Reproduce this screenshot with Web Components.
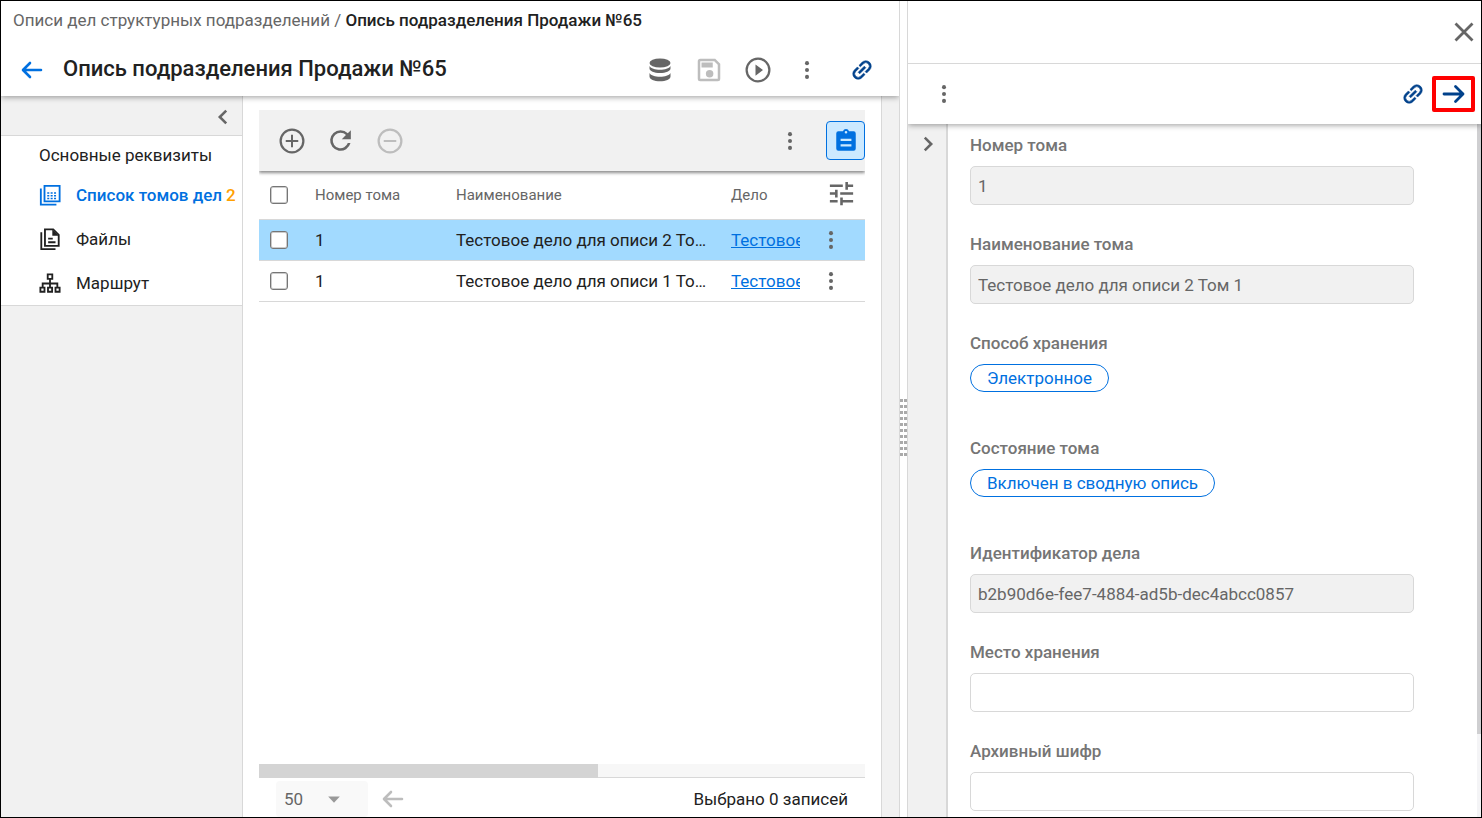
<!doctype html>
<html lang="ru">
<head>
    <meta charset="utf-8" />
    <title>Опись подразделения Продажи №65</title>
    <style>
        html, body {
            height: 100%;
            margin: 0;
        }
        body {
            --blue: #0070e0;
            --navy: #00418b;
            --grey: #666;
            --line: #d8d8d8;
            --panel: #f1f1f1;
            font: 17px/20px Roboto, "Liberation Sans", sans-serif;
            color: #212121;
        }
    </style>
</head>
<body>
    <x-workspace>
        <x-record slot="main"></x-record>
        <x-card slot="side"></x-card>
    </x-workspace>

<script>
const ICONS = {
    back: '<path d="M21 12H3.500M10 5l-7 7 7 7" fill="none" stroke="currentColor" stroke-width="2.600" stroke-linecap="round" stroke-linejoin="round"/>',
    forward: '<path d="M2 12h19M13.500 4.500l7.500 7.500-7.500 7.500" fill="none" stroke="currentColor" stroke-width="2.800" stroke-linecap="round" stroke-linejoin="round"/>',
    left: '<path d="M15.500 5l-7 7 7 7" fill="none" stroke="currentColor" stroke-width="2.800"/>',
    right: '<path d="M8.500 5l7 7-7 7" fill="none" stroke="currentColor" stroke-width="2.800"/>',
    close: '<path d="M3.500 3.500l17 17M20.500 3.500l-17 17" fill="none" stroke="currentColor" stroke-width="2.800"/>',
    more: '<circle cx="12" cy="4.500" r="2.200"/><circle cx="12" cy="12" r="2.200"/><circle cx="12" cy="19.500" r="2.200"/>',
    database: '<ellipse cx="12" cy="5" rx="10.500" ry="4.600"/><path d="M1.500 8c1.500 2.500 5.500 3.700 10.500 3.700s9-1.200 10.500-3.700v2.500c0 2.600-4.700 4.600-10.500 4.600S1.500 13.100 1.500 10.500zM1.500 15c1.500 2.500 5.500 3.700 10.500 3.700s9-1.200 10.500-3.700v3.500c0 2.700-4.700 4.800-10.500 4.800S1.500 21.200 1.500 18.500z"/>',
    save: '<path d="M17 3H5a2 2 0 0 0-2 2v14a2 2 0 0 0 2 2h14a2 2 0 0 0 2-2V7zm2 16H5V5h11.200L19 7.800z"/><circle cx="12.500" cy="15" r="3"/><path d="M6 6h9v4H6z"/>',
    play: '<path d="M10 16.500l6-4.500-6-4.500zM12 2a10 10 0 1 0 0 20 10 10 0 0 0 0-20zm0 18.200a8.200 8.200 0 1 1 0-16.400 8.200 8.200 0 0 1 0 16.400z"/>',
    add: '<path d="M12.800 7h-1.600v4.200H7v1.600h4.200V17h1.600v-4.200H17v-1.600h-4.200zM12 2a10 10 0 1 0 0 20 10 10 0 0 0 0-20zm0 18.200a8.200 8.200 0 1 1 0-16.400 8.200 8.200 0 0 1 0 16.400z"/>',
    remove: '<path d="M7 11.200v1.600h10v-1.600zM12 2a10 10 0 1 0 0 20 10 10 0 0 0 0-20zm0 18.200a8.200 8.200 0 1 1 0-16.400 8.200 8.200 0 0 1 0 16.400z"/>',
    refresh: '<path d="M17.650 6.350A7.960 7.960 0 0 0 12 4a8 8 0 1 0 7.730 10h-2.080A6 6 0 1 1 12 6c1.660 0 3.140.690 4.220 1.780L13 11h7V4z"/>',
    link: '<path transform="rotate(-45 12 12)" stroke="currentColor" stroke-width=".5" d="M3.900 12A3.100 3.100 0 0 1 7 8.900h4V7H7a5 5 0 0 0 0 10h4v-1.900H7A3.100 3.100 0 0 1 3.900 12zM8 13h8v-2H8zm9-6h-4v1.900h4a3.100 3.100 0 0 1 0 6.200h-4V17h4a5 5 0 0 0 0-10z"/>',
    tune: '<path d="M3 17v2h6v-2zM3 5v2h10V5zm10 16v-2h8v-2h-8v-2h-2v6zM7 9v2H3v2h4v2h2V9zm14 4v-2H11v2zm-6-4h2V7h4V5h-4V3h-2z"/>',
    clipboard: '<path d="M19 3h-4.180a3 3 0 0 0-5.640 0H5a2 2 0 0 0-2 2v14a2 2 0 0 0 2 2h14a2 2 0 0 0 2-2V5a2 2 0 0 0-2-2zm-7-.300a1.200 1.200 0 1 1 0 2.400 1.200 1.200 0 0 1 0-2.400zM17 17H7v-2h10zm0-5H7v-2h10z"/>',
    volumes: '<g fill="none" stroke="currentColor" stroke-width="2"><path d="M6 2h16.500v17H6zM2 5v17.500h17"/></g><path d="M9 9h2.200v1.700H9zm3.700 0h2.200v1.700h-2.200zm3.700 0h2.200v1.700h-2.200zM9 12h2.200v1.700H9zm3.700 0h2.200v1.700h-2.200zm3.700 0h2.200v1.700h-2.200zM9 15h2.200v1.700H9zm3.700 0h2.200v1.700h-2.200zm3.700 0h2.200v1.700h-2.200z"/>',
    files: '<g fill="none" stroke="currentColor" stroke-width="2"><path d="M6.500 1.500h9l6 6v12h-15zM2.500 4.500V23H18M10 11.500h5M10 15.500h8"/></g><path d="M14.500 1.500v7h7z"/>',
    route: '<g fill="none" stroke="currentColor" stroke-width="2"><path d="M9.500 2.500h5v5h-5zM1.500 17h4.500v4.500H1.500zM9.800 17h4.500v4.500H9.800zM18 17h4.500v4.500H18zM12 7.500V17M4 17v-4.500h16V17"/></g>',
    drop: '<path d="M5 9h14l-7 7.500z"/>'
};

class XElement extends HTMLElement {
    constructor () {
        super();
        this.attachShadow({mode: 'open'});
    }
    connectedCallback () {
        this.shadowRoot.innerHTML = `<style>*, :host { box-sizing: border-box; }</style>` + this.render();
    }
}

// <x-icon name="add" size="30">
customElements.define('x-icon', class extends XElement {
    render () {
        const size = this.getAttribute('size') || 24;
        return `
            <style>
                :host { display: inline-flex; flex: none; }
                svg { display: block; fill: currentColor; }
            </style>
            <svg width="${size}" height="${size}" viewBox="0 0 24 24" aria-hidden="true">${ICONS[this.getAttribute('name')]}</svg>`;
    }
});

// Icon button; kinds: navy, blue, toggled, marked
customElements.define('x-button', class extends XElement {
    render () {
        return `
            <style>
                :host { display: inline-flex; flex: none; }
                button {
                    display: flex;
                    align-items: center;
                    justify-content: center;
                    width: var(--button-width, 49px);
                    height: 36px;
                    padding: 0;
                    border: 0;
                    background: none;
                    color: var(--grey);
                    cursor: pointer;
                }
                button:disabled { color: #bdbdbd; cursor: default; }
                :host([kind=blue]) button { color: var(--blue); }
                :host([kind=navy]) button, :host([kind=marked]) button { color: var(--navy); }
                :host([kind=marked]) button {
                    width: 43px;
                    border: 4px solid #f00;
                    border-radius: 2px;
                }
                :host([kind=toggled]) button {
                    width: 39px;
                    height: 39px;
                    border: 1px solid var(--blue);
                    border-radius: 4px;
                    background: #cce9ff;
                    color: var(--blue);
                }
            </style>
            <button type="button" aria-label="${this.getAttribute('label')}" ${this.hasAttribute('disabled') ? 'disabled' : ''}>
                <x-icon name="${this.getAttribute('icon')}" size="${this.getAttribute('size') || 24}"></x-icon>
            </button>`;
    }
});

customElements.define('x-workspace', class extends XElement {
    render () {
        return `
            <style>
                :host {
                    display: flex;
                    height: 100%;
                    border: 1px solid #000;
                    background: #fff;
                    overflow: hidden;
                }
                .main { flex: 898 1 0; min-width: 0; display: flex; }
                .side { flex: 573 1 0; min-width: 0; display: flex; }
                .splitter {
                    flex: none;
                    display: flex;
                    align-items: center;
                    justify-content: center;
                    width: 9px;
                    border: solid var(--line);
                    border-width: 0 1px;
                    padding-top: 37px;
                    cursor: col-resize;
                }
                .grip {
                    width: 7px;
                    height: 57px;
                    background:
                        linear-gradient(#fff, #fff) 3px 0 / 1px 100% no-repeat,
                        repeating-linear-gradient(#aaa 0 3px, #fff 3px 6px);
                }
                ::slotted(*) { flex: 1; min-width: 0; }
            </style>
            <div class="main"><slot name="main"></slot></div>
            <div class="splitter"><div class="grip"></div></div>
            <div class="side"><slot name="side"></slot></div>`;
    }
});

customElements.define('x-record', class extends XElement {
    render () {
        return `
            <style>
                :host { display: flex; flex-direction: column; }
                header {
                    position: relative;
                    z-index: 1;
                    background: #fff;
                    box-shadow: 0 1px 6px rgba(0, 0, 0, 0.4);
                    clip-path: inset(0 0 -10px 0);
                }
                nav { padding: 9px 12px 0; color: var(--grey); }
                nav a { color: inherit; text-decoration: none; }
                nav b { font-weight: 500; color: #212121; }
                .title {
                    display: flex;
                    align-items: center;
                    height: 52px;
                    margin-top: 14px;
                    padding: 0 13px 0 6px;
                }
                h1 {
                    flex: 1;
                    margin: 0 0 2px 7px;
                    font-size: 22px;
                    line-height: 28px;
                    font-weight: 500;
                }
                .last { margin-left: 6px; }
                .body { flex: 1; display: flex; min-height: 0; background: var(--panel); }
                main {
                    flex: 1;
                    display: flex;
                    min-width: 0;
                    margin-right: 17px;
                    padding: 14px 16px 0;
                    border-right: 1px solid var(--line);
                    background: #fff;
                }
            </style>
            <header>
                <nav><a href="#registry">Описи дел структурных подразделений</a> / <b>Опись подразделения Продажи №65</b></nav>
                <div class="title">
                    <x-button icon="back" label="Назад" kind="blue"></x-button>
                    <h1>Опись подразделения Продажи №65</h1>
                    <x-button icon="database" label="Данные"></x-button>
                    <x-button icon="save" size="30" label="Сохранить" disabled></x-button>
                    <x-button icon="play" size="30" label="Запустить"></x-button>
                    <x-button icon="more" size="22" label="Ещё"></x-button>
                    <x-button class="last" icon="link" size="26" label="Ссылка" kind="navy"></x-button>
                </div>
            </header>
            <div class="body">
                <x-sidenav>
                    <x-navitem>Основные реквизиты</x-navitem>
                    <x-navitem icon="volumes" count="2" current>Список томов дел</x-navitem>
                    <x-navitem icon="files">Файлы</x-navitem>
                    <x-navitem icon="route">Маршрут</x-navitem>
                </x-sidenav>
                <main><x-grid></x-grid></main>
            </div>`;
    }
});

customElements.define('x-sidenav', class extends XElement {
    render () {
        return `
            <style>
                :host {
                    flex: none;
                    display: block;
                    width: 242px;
                    border-right: 1px solid var(--line);
                }
                .top {
                    display: flex;
                    align-items: flex-end;
                    justify-content: flex-end;
                    height: 40px;
                    border-bottom: 1px solid var(--line);
                    --button-width: 38px;
                }
                nav { background: #fff; border-bottom: 1px solid var(--line); }
            </style>
            <div class="top"><x-button icon="left" size="22" label="Свернуть"></x-button></div>
            <nav><slot></slot></nav>`;
    }
});

customElements.define('x-navitem', class extends XElement {
    render () {
        const icon = this.getAttribute('icon');
        const count = this.getAttribute('count');
        return `
            <style>
                :host { display: block; }
                a {
                    display: flex;
                    align-items: center;
                    height: ${icon ? 44 : 37}px;
                    padding-left: 38px;
                    color: inherit;
                    text-decoration: none;
                    white-space: nowrap;
                }
                x-icon { margin-right: 15px; }
                :host([current]) a { color: var(--blue); font-weight: 500; }
                .count { margin-left: 4px; color: #ffa000; }
            </style>
            <a href="#section">
                ${icon ? `<x-icon name="${icon}" size="22"></x-icon>` : ''}
                <slot></slot>
                ${count ? `<span class="count">${count}</span>` : ''}
            </a>`;
    }
});

customElements.define('x-grid', class extends XElement {
    render () {
        const rows = [
            ['1', 'Тестовое дело для описи 2 Том 1', 'Тестовое'],
            ['1', 'Тестовое дело для описи 1 Том 1', 'Тестовое']
        ];
        return `
            <style>
                :host { flex: 1; display: flex; flex-direction: column; min-width: 0; }
                .toolbar {
                    display: flex;
                    align-items: center;
                    height: 61px;
                    padding-left: 8px;
                    background: var(--panel);
                    box-shadow: 0 2px 3px rgba(0, 0, 0, 0.45);
                    clip-path: inset(0 0 -10px 0);
                }
                .space { flex: 1; }
                .toggle { margin-left: 12px; }
                table { width: 100%; border-collapse: collapse; table-layout: fixed; }
                th, td {
                    height: 41px;
                    padding: 0 10px;
                    border-bottom: 1px solid var(--line);
                    text-align: left;
                    overflow: hidden;
                    white-space: nowrap;
                    text-overflow: ellipsis;
                }
                th { height: 48px; font-size: 15px; font-weight: 400; color: var(--grey); }
                .check { width: 46px; }
                .num { width: 141px; }
                .deal { width: 85px; padding-right: 6px; }
                .menu { width: 59px; }
                th.menu, td.menu { padding: 0; overflow: visible; }
                th.menu x-button { --button-width: 70px; }
                a { display: block; overflow: hidden; color: var(--blue); }
                .selected { background: #a2daff; }
                input {
                    display: block;
                    appearance: none;
                    width: 18px;
                    height: 18px;
                    margin: 0 1px;
                    border: 1px solid #767676;
                    border-radius: 3px;
                    background: #fff;
                    box-shadow: inset 0 0 0 1px #ccc;
                }
                td x-button { display: flex; }
                .rest { flex: 1; }
                .scroll { height: 14px; background: #f7f7f7; border-bottom: 1px solid var(--line); }
                .thumb { width: 56%; height: 14px; background: #d4d4d4; }
                footer {
                    display: flex;
                    align-items: flex-start;
                    height: 39px;
                    padding: 3px 17px 0;
                    overflow: hidden;
                }
                .size {
                    display: grid;
                    align-items: center;
                    width: 92px;
                    border-radius: 4px;
                    background: #f9f9f9;
                }
                .size > * { grid-area: 1 / 1; }
                .size x-icon { justify-self: end; margin-right: 24px; color: #999; pointer-events: none; }
                select {
                    appearance: none;
                    height: 36px;
                    padding: 0 8px;
                    border: 0;
                    background: none;
                    font: inherit;
                    color: var(--grey);
                }
                output { margin-left: auto; line-height: 36px; }
            </style>
            <div class="toolbar">
                <x-button icon="add" size="30" label="Добавить"></x-button>
                <x-button icon="refresh" size="31" label="Обновить"></x-button>
                <x-button icon="remove" size="30" label="Удалить" disabled></x-button>
                <span class="space"></span>
                <x-button icon="more" size="22" label="Ещё"></x-button>
                <x-button class="toggle" icon="clipboard" size="26" label="Карточка" kind="toggled"></x-button>
            </div>
            <table>
                <thead>
                    <tr>
                        <th class="check"><input type="checkbox" aria-label="Выбрать все"></th>
                        <th class="num">Номер тома</th>
                        <th>Наименование</th>
                        <th class="deal">Дело</th>
                        <th class="menu"><x-button icon="tune" size="31" label="Настройка колонок"></x-button></th>
                    </tr>
                </thead>
                <tbody>
                    ${rows.map(([num, name, deal], i) => `
                    <tr class="${i === 0 ? 'selected' : ''}">
                        <td><input type="checkbox" aria-label="Выбрать строку ${i + 1}"></td>
                        <td>${num}</td>
                        <td>${name}</td>
                        <td class="deal"><a href="#deal">${deal}</a></td>
                        <td class="menu"><x-button icon="more" size="22" label="Ещё"></x-button></td>
                    </tr>`).join('')}
                </tbody>
            </table>
            <div class="rest"></div>
            <div class="scroll"><div class="thumb"></div></div>
            <footer>
                <div class="size">
                    <select aria-label="Записей на странице"><option>50</option><option>100</option></select>
                    <x-icon name="drop" size="20"></x-icon>
                </div>
                <x-button icon="back" label="Предыдущая страница" disabled></x-button>
                <output>Выбрано 0 записей</output>
            </footer>`;
    }
});

customElements.define('x-card', class extends XElement {
    render () {
        return `
            <style>
                :host { display: flex; flex-direction: column; }
                .close {
                    flex: none;
                    display: flex;
                    align-items: center;
                    justify-content: flex-end;
                    height: 63px;
                    border-bottom: 1px solid var(--line);
                    --button-width: 34px;
                }
                .toolbar {
                    position: relative;
                    z-index: 1;
                    flex: none;
                    display: flex;
                    align-items: center;
                    justify-content: space-between;
                    height: 60px;
                    padding: 0 6px 0 11px;
                    background: #fff;
                    box-shadow: 0 1px 6px rgba(0, 0, 0, 0.4);
                    clip-path: inset(0 0 -10px 0);
                }
                .links { display: flex; --button-width: 38px; }
                .body { flex: 1; display: flex; min-height: 0; }
                aside {
                    flex: none;
                    width: 40px;
                    padding-top: 2px;
                    border-right: 2px solid var(--line);
                    background: var(--panel);
                    --button-width: 40px;
                }
                form { flex: 1; min-width: 0; padding: 11px 63px 0 22px; overflow: hidden; }
                .track { flex: none; width: 4px; background: #f4f4f6; }
                .thumb { height: 88%; background: #cfcfd1; }
            </style>
            <div class="close"><x-button icon="close" label="Закрыть"></x-button></div>
            <div class="toolbar">
                <x-button icon="more" size="22" label="Ещё"></x-button>
                <div class="links">
                    <x-button icon="link" size="26" label="Ссылка" kind="navy"></x-button>
                    <x-button icon="forward" label="Открыть" kind="marked"></x-button>
                </div>
            </div>
            <div class="body">
                <aside><x-button icon="right" size="22" label="Развернуть"></x-button></aside>
                <form>
                    <x-field label="Номер тома" value="1" readonly></x-field>
                    <x-field label="Наименование тома" value="Тестовое дело для описи 2 Том 1" readonly></x-field>
                    <x-state label="Способ хранения">Электронное</x-state>
                    <x-state label="Состояние тома">Включен в сводную опись</x-state>
                    <x-field label="Идентификатор дела" value="b2b90d6e-fee7-4884-ad5b-dec4abcc0857" readonly></x-field>
                    <x-field label="Место хранения"></x-field>
                    <x-field label="Архивный шифр"></x-field>
                </form>
                <div class="track"><div class="thumb"></div></div>
            </div>`;
    }
});

customElements.define('x-field', class extends XElement {
    render () {
        return `
            <style>
                :host { display: block; margin-bottom: 29px; }
                label { display: block; margin-bottom: 11px; font-weight: 500; color: #757575; }
                input {
                    display: block;
                    width: 100%;
                    height: 39px;
                    padding: 0 7px;
                    border: 1px solid var(--line);
                    border-radius: 5px;
                    background: #fff;
                    font: inherit;
                    color: var(--grey);
                }
                input:read-only { background: var(--panel); }
            </style>
            <label for="input">${this.getAttribute('label')}</label>
            <input id="input" type="text" value="${this.getAttribute('value') || ''}" ${this.hasAttribute('readonly') ? 'readonly' : ''}>`;
    }
});

customElements.define('x-state', class extends XElement {
    render () {
        return `
            <style>
                :host { display: block; margin-bottom: 46px; }
                .label { margin-bottom: 11px; font-weight: 500; color: #757575; }
                .chip {
                    display: block;
                    width: fit-content;
                    height: 28px;
                    padding: 0 16px;
                    border: 1px solid var(--blue);
                    border-radius: 14px;
                    line-height: 26px;
                    color: var(--blue);
                }
            </style>
            <div class="label">${this.getAttribute('label')}</div>
            <span class="chip"><slot></slot></span>`;
    }
});
</script>
</body>
</html>
